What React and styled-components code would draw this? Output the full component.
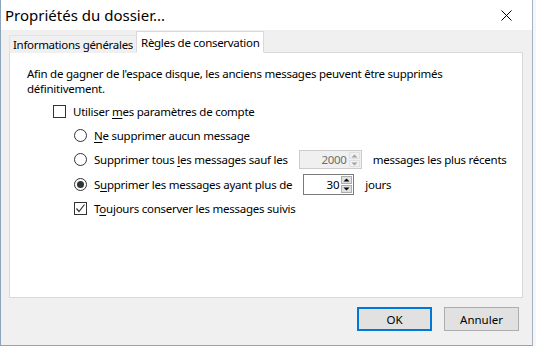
import React from "react";
import styled, { createGlobalStyle } from "styled-components";

const Global = createGlobalStyle`
  html, body { margin: 0; padding: 0; background: #f4f6f8; }
  body { font-family: "Noto Sans", "Open Sans", sans-serif; font-size: 11.5px; color: #000; }
`;

const Window = styled.div`
  box-sizing: border-box;
  width: 533px;
  height: 346px;
  border-left: 1px solid #8ea3bd;
  border-right: 1px solid #a9b3bf;
  border-bottom: 1px solid #8ea3bd;
  background: #f0f0f0;
  display: flex;
  flex-direction: column;
`;

const TitleBar = styled.div`
  height: 30px;
  flex: none;
  background: #ffffff;
  display: flex;
  align-items: center;
  justify-content: space-between;
  padding: 0 20px 0 4px;
  font-size: 15px;
  color: #000;
`;

const Body = styled.div`
  flex: 1;
  display: flex;
  flex-direction: column;
  padding: 2px 9px 0 8px;
`;

const TabStrip = styled.div`
  display: flex;
  align-items: flex-end;
  height: 21px;
  position: relative;
  z-index: 1;
  margin-bottom: -1px;
`;

const Tab = styled.div`
  box-sizing: border-box;
  height: ${(p) => (p.$active ? "22px" : "18px")};
  padding: 0 ${(p) => (p.$active ? "4px" : "3px")};
  background: ${(p) => (p.$active ? "#ffffff" : "#f0f0f0")};
  border: 1px solid ${(p) => (p.$active ? "#d9d9d9" : "#e3e3e3")};
  border-bottom: ${(p) => (p.$active ? "1px solid #ffffff" : "none")};
  margin-left: ${(p) => (p.$active ? "-1px" : "0")};
  display: flex;
  align-items: center;
  white-space: nowrap;
  letter-spacing: -0.3px;
`;

const Panel = styled.div`
  box-sizing: border-box;
  height: 246px;
  background: #ffffff;
  border: 1px solid #d9d9d9;
  padding: 13px 14px 0 17px;
  display: flex;
  flex-direction: column;
`;

const Intro = styled.p`
  margin: 0 0 3px 0;
  line-height: 15px;
  letter-spacing: -0.25px;
`;

const Row = styled.div`
  display: flex;
  align-items: center;
  height: 24.4px;
  padding-left: ${(p) => p.$indent}px;
  gap: 11px;
  white-space: nowrap;
  letter-spacing: -0.25px;
`;

const Label = styled.label`
  display: flex;
  align-items: center;
  gap: 7px;
`;

const Box = styled.span`
  box-sizing: border-box;
  width: 13px;
  height: 13px;
  border: 1px solid #333333;
  background: #fff;
  display: inline-flex;
  align-items: center;
  justify-content: center;
  flex: none;
`;

const Radio = styled.span`
  box-sizing: border-box;
  width: 13px;
  height: 13px;
  border-radius: 50%;
  border: 1px solid #333333;
  background: #fff;
  display: inline-flex;
  align-items: center;
  justify-content: center;
  flex: none;
  &::after {
    content: "";
    display: ${(p) => (p.$checked ? "block" : "none")};
    width: 7px;
    height: 7px;
    border-radius: 50%;
    background: #333333;
  }
`;

const U = styled.span`
  text-decoration: underline;
  text-underline-offset: 2px;
`;

const Spin = styled.div`
  box-sizing: border-box;
  width: ${(p) => p.$w}px;
  height: ${(p) => p.$h}px;
  border: 1px solid ${(p) => (p.$disabled ? "#cccccc" : "#7a7a7a")};
  background: ${(p) => (p.$disabled ? "#f0f0f0" : "#ffffff")};
  display: flex;
  align-items: stretch;
`;

const SpinValue = styled.span`
  flex: 1;
  padding-right: 2px;
  display: flex;
  align-items: center;
  justify-content: flex-end;
  color: ${(p) => (p.$disabled ? "#6d6d6d" : "#000")};
`;

const Arrows = styled.div`
  width: 11px;
  display: flex;
  flex-direction: column;
  gap: 1px;
  padding: 1px 1px 1px 0;
`;

const ArrowBtn = styled.div`
  flex: 1;
  background: ${(p) => (p.$disabled ? "#f0f0f0" : "#e1e1e1")};
  border: 1px solid ${(p) => (p.$disabled ? "#e0e0e0" : "#adadad")};
  display: flex;
  align-items: center;
  justify-content: center;
`;

const Footer = styled.div`
  display: flex;
  justify-content: flex-end;
  gap: 12px;
  padding: 9px 4px 0 0;
`;

const Button = styled.button`
  box-sizing: border-box;
  width: ${(p) => p.$w}px;
  height: 24px;
  font-family: inherit;
  font-size: 11.5px;
  background: #e1e1e1;
  border: ${(p) => (p.$default ? "2px solid #0078d7" : "1px solid #adadad")};
  padding: 0;
  color: #000;
`;

const Tri = ({ up, color }) => (
  <svg width="7" height="4" viewBox="0 0 7 4">
    <path d={up ? "M0.5 3.5 L3.5 0.5 L6.5 3.5 Z" : "M0.5 0.5 L3.5 3.5 L6.5 0.5 Z"} fill={color} />
  </svg>
);

const SpinBox = ({ value, w, h, disabled }) => (
  <Spin $w={w} $h={h} $disabled={disabled}>
    <SpinValue $disabled={disabled}>{value}</SpinValue>
    <Arrows>
      <ArrowBtn $disabled={disabled}>
        <Tri up color={disabled ? "#a0a0a0" : "#000"} />
      </ArrowBtn>
      <ArrowBtn $disabled={disabled}>
        <Tri color={disabled ? "#a0a0a0" : "#000"} />
      </ArrowBtn>
    </Arrows>
  </Spin>
);

export default function App() {
  return (
    <>
      <Global />
      <Window>
        <TitleBar>
          <span>Propriétés du dossier...</span>
          <svg width="11" height="11" viewBox="0 0 11 11">
            <path d="M0.5 0.5 L10.5 10.5 M10.5 0.5 L0.5 10.5" stroke="#000" strokeWidth="1" />
          </svg>
        </TitleBar>
        <Body>
          <TabStrip>
            <Tab>Informations générales</Tab>
            <Tab $active>Règles de conservation</Tab>
          </TabStrip>
          <Panel>
            <Intro>
              Afin de gagner de l'espace disque, les anciens messages peuvent être supprimés
              <br />
              définitivement.
            </Intro>
            <Row $indent={26}>
              <Label>
                <Box />
                <span>
                  Utiliser <U>m</U>es paramètres de compte
                </span>
              </Label>
            </Row>
            <Row $indent={47}>
              <Label>
                <Radio />
                <span>
                  <U>N</U>e supprimer aucun message
                </span>
              </Label>
            </Row>
            <Row $indent={47}>
              <Label>
                <Radio />
                <span>
                  Supprimer tous <U>l</U>es messages sauf les
                </span>
              </Label>
              <SpinBox value="2000" w={63} h={19} disabled />
              <span>messages les plus récents</span>
            </Row>
            <Row $indent={47}>
              <Label>
                <Radio $checked />
                <span>
                  S<U>u</U>pprimer les messages ayant plus de
                </span>
              </Label>
              <SpinBox value="30" w={51} h={21} />
              <span>jours</span>
            </Row>
            <Row $indent={47}>
              <Label>
                <Box>
                  <svg width="11" height="11" viewBox="0 0 11 11">
                    <path d="M1.5 5.5 L4 8.5 L9.5 1.5" stroke="#333" strokeWidth="1.2" fill="none" />
                  </svg>
                </Box>
                <span>
                  T<U>o</U>ujours conserver les messages suivis
                </span>
              </Label>
            </Row>
          </Panel>
          <Footer>
            <Button $default $w={75}>OK</Button>
            <Button $w={75}>Annuler</Button>
          </Footer>
        </Body>
      </Window>
    </>
  );
}
